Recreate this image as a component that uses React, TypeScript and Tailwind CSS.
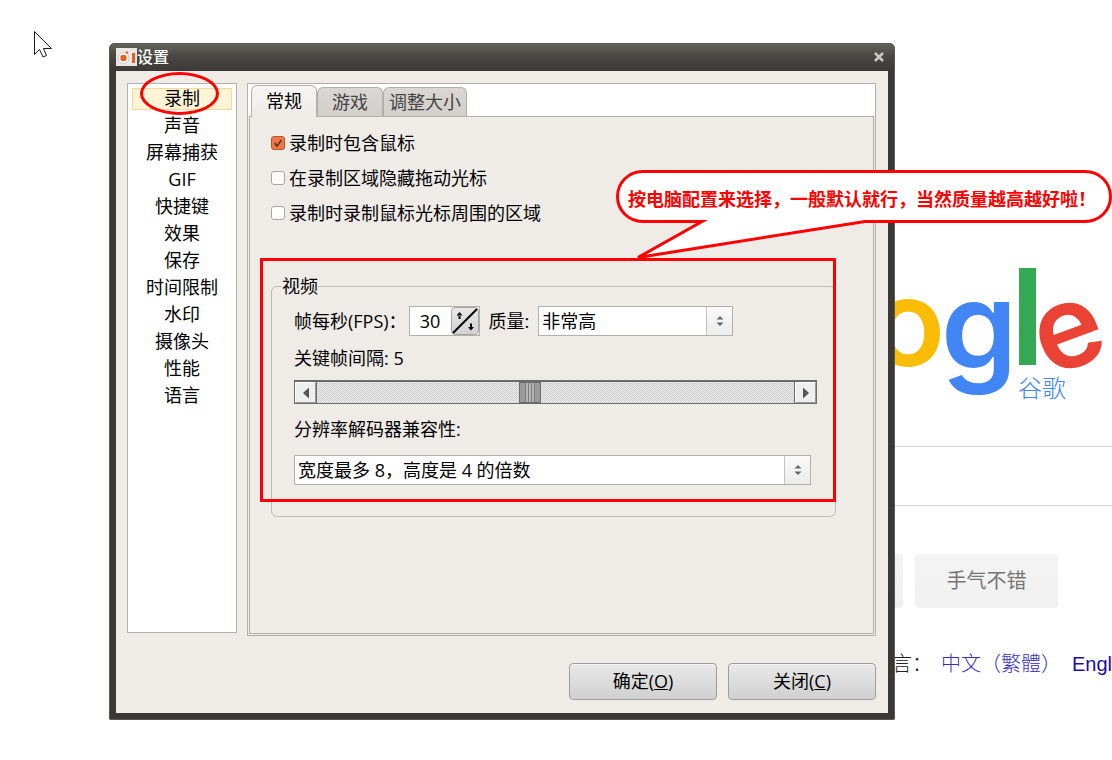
import React, { useState } from 'react';

const sections = [
  '录制',
  '声音',
  '屏幕捕获',
  'GIF',
  '快捷键',
  '效果',
  '保存',
  '时间限制',
  '水印',
  '摄像头',
  '性能',
  '语言',
];

const tabs = ['常规', '游戏', '调整大小'];

const recordOptions = [
  { id: 'include-mouse', label: '录制时包含鼠标', checked: true },
  { id: 'hide-drag-cursor', label: '在录制区域隐藏拖动光标', checked: false },
  { id: 'record-around', label: '录制时录制鼠标光标周围的区域', checked: false },
];

function SearchPage() {
  return (
    <main className="ml-[690px] pt-[260px]">
      <div className="relative h-[186px]">
        <svg
          className="h-[146px] w-[422px] overflow-visible font-['Inter',sans-serif] text-[122px] font-semibold"
          viewBox="0 0 422 146"
          role="img"
          aria-label="Google"
        >
          <text y="106">
            <tspan x="6" fill="#4285f4">G</tspan>
            <tspan x="106" fill="#ea4335">o</tspan>
            <tspan x="181" fill="#fbbc05">o</tspan>
            <tspan x="251" y="109" fill="#4285f4">g</tspan>
            <tspan x="320" y="105" className="text-[134px]" fill="#34a853">l</tspan>
            <tspan x="358" y="117" rotate="-20" className="text-[116px]" fill="#ea4335">e</tspan>
          </text>
        </svg>
        <span className="absolute left-[328px] top-[114px] text-2xl leading-7 font-light text-[#4285f4]">
          谷歌
        </span>
      </div>
      <input
        aria-label="搜索"
        className="block h-[60px] w-full border-y border-[#d9d9d9] bg-white px-4 outline-none"
      />
      <div className="mt-12 flex gap-3 pl-[70px] text-xl text-[#757575]">
        <button className="h-[54px] w-[143px] shrink-0 rounded-sm bg-linear-to-b from-[#f4f4f4] to-[#f0f0f0]">
          搜索
        </button>
        <button className="h-[54px] w-[143px] shrink-0 rounded-sm bg-linear-to-b from-[#f4f4f4] to-[#f0f0f0]">
          手气不错
        </button>
      </div>
      <p className="mt-[42px] flex pl-[102px] text-xl leading-7 font-light whitespace-nowrap text-[#222]">
        <span>使用下列语言：</span>
        <a href="#tw" className="ml-[9px] text-[#3a2fc0]">中文（繁體）</a>
        <a href="#en" className="ml-[11px] font-['Liberation_Sans',sans-serif] text-[#1a0dab]">English</a>
      </p>
    </main>
  );
}

function AppIcon() {
  return (
    <svg className="h-[18px] w-[21px]" viewBox="0 0 21 18" aria-hidden="true">
      <rect width="21" height="18" fill="#e9e8e6" />
      <circle cx="7.500" cy="10" r="5.500" fill="#f8f8f8" stroke="#c9c9c9" />
      <circle cx="7.500" cy="10" r="3.200" fill="#e8611c" />
      <circle cx="11" cy="4.500" r="1.200" fill="#e8611c" />
      <rect x="16" y="5" width="3" height="10" fill="#e8611c" />
    </svg>
  );
}

function TitleBar() {
  return (
    <header className="flex h-7 items-center bg-linear-to-b from-[#66665f] via-[#494844] via-45% to-[#3a3935] pl-[7px] pr-2">
      <AppIcon />
      <h1 className="text-base leading-7 font-medium text-white">设置</h1>
      <button aria-label="关闭窗口" className="ml-auto flex h-4 w-4 items-center justify-center">
        <svg className="h-3 w-3" viewBox="0 0 12 12" aria-hidden="true">
          <path d="M2 2l8 8M10 2l-8 8" stroke="#c9c8c4" strokeWidth="2.500" />
        </svg>
      </button>
    </header>
  );
}

function SectionList() {
  const [active, setActive] = useState(sections[0]);

  return (
    <nav className="mb-[3px] w-[110px] border border-[#b3b0ac] bg-white px-1 pt-1">
      <ul className="flex flex-col gap-[5px]">
        {sections.map((name) => (
          <li key={name}>
            <button
              onClick={() => setActive(name)}
              className={
                name === active
                  ? 'block h-[22px] w-full border border-[#fcd79c] bg-[#fff5d6] pb-[2px] leading-[18px]'
                  : 'block h-[22px] w-full border border-transparent pb-[2px] leading-[18px]'
              }
            >
              {name}
            </button>
          </li>
        ))}
      </ul>
    </nav>
  );
}

function Spinner() {
  const [fps, setFps] = useState(30);

  return (
    <div className="ml-[2px] flex h-[30px] w-[71px] border border-[#b3b0ac] bg-white">
      <input
        id="fps"
        value={fps}
        onChange={(e) => setFps(Number(e.target.value) || 0)}
        className="w-[41px] bg-white text-center outline-none"
      />
      <div className="relative flex flex-1 flex-col rounded-sm border border-[#a8a5a1] bg-linear-to-b from-[#e8e8e8] to-[#d2d2d2]">
        <svg className="absolute inset-0 h-full w-full" viewBox="0 0 26 26" aria-hidden="true">
          <path d="M1 25L25 1" stroke="#000" strokeWidth="2" />
          <path d="M4.500 7.500h6l-3-3.500zM6.500 7h2v4h-2zM16 19h6l-3 3.500zM18 15.500h2v4h-2z" />
        </svg>
        <button aria-label="增加" className="relative flex-1" onClick={() => setFps(fps + 1)} />
        <button aria-label="减少" className="relative flex-1" onClick={() => setFps(fps - 1)} />
      </div>
    </div>
  );
}

function Select({ id, value, className }: { id: string; value: string; className: string }) {
  return (
    <div className={'relative h-[30px] border border-[#b3b0ac] bg-white ' + className}>
      <select id={id} className="h-full w-full appearance-none bg-white pl-[3px] outline-none">
        <option>{value}</option>
      </select>
      <span className="pointer-events-none absolute inset-y-0 right-0 flex w-[26px] items-center justify-center border-l border-[#c6c3bf] bg-linear-to-b from-[#fafafa] to-[#ececec]">
        <svg className="h-[10px] w-2" viewBox="0 0 8 10" fill="#666" aria-hidden="true">
          <path d="M0.500 3.500L4 0l3.500 3.500zM0.500 6.500L4 10l3.500-3.500z" />
        </svg>
      </span>
    </div>
  );
}

function KeyframeSlider({ value, onChange }: { value: number; onChange: (v: number) => void }) {
  const arrow =
    'flex w-[21px] items-center justify-center border border-t-white border-l-white border-r-[#9a9a9a] border-b-[#9a9a9a] bg-[#eee]';

  return (
    <div className="mr-[18px] flex h-6 border border-t-2 border-[#6b6b6b]">
      <button aria-label="向左" className={arrow} onClick={() => onChange(Math.max(1, value - 1))}>
        <svg className="h-3 w-2" viewBox="0 0 8 12" fill="#555" aria-hidden="true">
          <path d="M7 0.500v11L1 6z" />
        </svg>
      </button>
      <input
        id="keyframe"
        type="range"
        min={1}
        max={10}
        value={value}
        onChange={(e) => onChange(Number(e.target.value))}
        className="h-[21px] min-w-0 flex-1 appearance-none border-x border-[#6b6b6b] bg-[repeating-conic-gradient(#c9c9c9_0_25%,#f1f1f1_0_50%)] bg-size-[2px_2px] outline-none [&::-webkit-slider-thumb]:h-[21px] [&::-webkit-slider-thumb]:w-[22px] [&::-webkit-slider-thumb]:appearance-none [&::-webkit-slider-thumb]:border [&::-webkit-slider-thumb]:border-[#6b6b6b] [&::-webkit-slider-thumb]:bg-[linear-gradient(90deg,#9b9b9b_5px,transparent_5px_15px,#9b9b9b_15px),repeating-linear-gradient(90deg,#b5b5b5_0_2px,#7d7d7d_2px_3px)]"
      />
      <button aria-label="向右" className={arrow} onClick={() => onChange(Math.min(10, value + 1))}>
        <svg className="h-3 w-2" viewBox="0 0 8 12" fill="#555" aria-hidden="true">
          <path d="M1 0.500v11L7 6z" />
        </svg>
      </button>
    </div>
  );
}

function VideoGroup() {
  const [interval, setInterval] = useState(5);

  return (
    <fieldset className="mt-[45px] rounded-md border border-[#bdb9b9] pt-[6px] pb-[31px] pl-[22px]">
      <legend className="-ml-3 leading-7">视频</legend>
      <div className="flex items-center">
        <label htmlFor="fps">帧每秒(FPS)：</label>
        <Spinner />
        <label htmlFor="quality" className="ml-[9px]">质量:</label>
        <Select id="quality" value="非常高" className="ml-[9px] w-[195px]" />
      </div>
      <label htmlFor="keyframe" className="block leading-[44px]">
        关键帧间隔: {interval}
      </label>
      <KeyframeSlider value={interval} onChange={setInterval} />
      <label htmlFor="codec" className="block leading-[51px]">分辨率解码器兼容性:</label>
      <Select id="codec" value="宽度最多 8，高度是 4 的倍数" className="mr-6" />
    </fieldset>
  );
}

function RecordTabs() {
  const [tab, setTab] = useState(0);

  return (
    <section className="ml-[10px] flex min-w-0 flex-1 flex-col border border-[#b3b0ac] bg-white">
      <div role="tablist" className="flex h-8 items-end pl-[3px]">
        {tabs.map((name, i) => (
          <button
            key={name}
            role="tab"
            aria-selected={i === tab}
            onClick={() => setTab(i)}
            className={
              i === tab
                ? 'relative z-10 -mb-px h-8 w-[66px] rounded-t-md border border-b-0 border-[#b3b0ac] bg-linear-to-b from-[#f6f5f3] to-[#efebe7] pb-[2px] whitespace-nowrap'
                : 'h-[29px] min-w-[66px] rounded-t-md border border-b-0 border-[#b3b0ac] bg-linear-to-b from-[#d9d6d3] to-[#d3cfcb] px-[5px] pb-[2px] whitespace-nowrap text-[#444]'
            }
          >
            {name}
          </button>
        ))}
      </div>
      <div className="flex flex-1 bg-[#efebe7] px-px pb-px">
        <div className="min-h-[518px] flex-1 border border-[#b3b0ac] pt-3 pr-[37px] pl-[21px]">
          <div className="flex flex-col gap-[7px]">
            {recordOptions.map((option) => (
              <div key={option.id} className="flex h-7 items-center gap-1">
                <span className="relative flex h-[14px] w-[14px]">
                  <input
                    id={option.id}
                    type="checkbox"
                    defaultChecked={option.checked}
                    className="peer h-[14px] w-[14px] appearance-none rounded-[3px] border border-[#a9a6a3] bg-white checked:border-[#b5552f] checked:bg-[#f07746]"
                  />
                  <svg
                    className="pointer-events-none absolute inset-0 hidden h-[14px] w-[14px] peer-checked:block"
                    viewBox="0 0 14 14"
                    aria-hidden="true"
                  >
                    <path d="M3.500 7l2.500 3 4.500-6" fill="none" stroke="#6b3a28" strokeWidth="2" />
                  </svg>
                </span>
                <label htmlFor={option.id}>{option.label}</label>
              </div>
            ))}
          </div>
          <VideoGroup />
        </div>
      </div>
    </section>
  );
}

function SettingsDialog() {
  const button =
    'h-[37px] w-[148px] rounded-sm border border-[#9d9d9d] bg-linear-to-b from-[#e9e9e9] to-[#d0d0d0] pb-[2px] shadow-[inset_0_1px_0_#f5f5f5]';

  return (
    <div
      role="dialog"
      aria-label="设置"
      className="absolute top-[43px] left-[109px] w-[786px] overflow-hidden rounded-t-md rounded-b-xs bg-[#3a3935] text-lg leading-7 text-black"
    >
      <TitleBar />
      <div className="mx-[7px] mb-[7px] bg-[#efebe7] pt-3 pr-3 pb-[13px] pl-[11px]">
        <div className="flex">
          <SectionList />
          <RecordTabs />
        </div>
        <div className="mt-[27px] flex justify-end gap-[11px]">
          <button className={button}>
            确定(<u>O</u>)
          </button>
          <button className={button}>
            关闭(<u>C</u>)
          </button>
        </div>
      </div>
      <div className="pointer-events-none absolute inset-0 rounded-t-md rounded-b-xs border border-[#5a5954]" />
    </div>
  );
}

function Annotations() {
  return (
    <>
      <div className="pointer-events-none absolute top-[72px] left-[140px] h-[43px] w-[79px] rounded-[50%] border-3 border-[#fe0000]" />
      <div className="pointer-events-none absolute top-[258px] left-[260px] h-[244px] w-[576px] border-3 border-[#fe0000]" />
      <div className="pointer-events-none absolute top-[170px] left-[616px] h-[90px] w-[496px]">
        <svg className="absolute inset-0 h-full w-full" viewBox="0 0 496 90" aria-hidden="true">
          <path
            d="M27 1.500H469C484 1.500 494.500 13 494.500 26.500S484 51.500 469 51.500H249L22 87.500L86 51.500H27C12 51.500 1.500 40 1.500 26.500S12 1.500 27 1.500Z"
            fill="#fff"
            stroke="#fe0000"
            strokeWidth="3"
          />
        </svg>
        <p className="relative pt-[15px] pl-3 text-lg leading-7 font-bold whitespace-nowrap text-[#fe0000]">
          按电脑配置来选择，一般默认就行，当然质量越高越好啦！
        </p>
      </div>
    </>
  );
}

export default function App() {
  return (
    <div className="relative min-h-screen overflow-hidden bg-white font-['Open_Sans','Noto_Sans_CJK_SC',sans-serif]">
      <SearchPage />
      <SettingsDialog />
      <Annotations />
      <svg className="absolute top-[30px] left-[33px] h-7 w-5" viewBox="0 0 20 28" aria-hidden="true">
        <path
          d="M1.500 1.500V24.500L6.500 19.500L10 27L13.500 25.500L10.500 18.500H18.500Z"
          fill="#fff"
          stroke="#1a1a2e"
        />
      </svg>
    </div>
  );
}
